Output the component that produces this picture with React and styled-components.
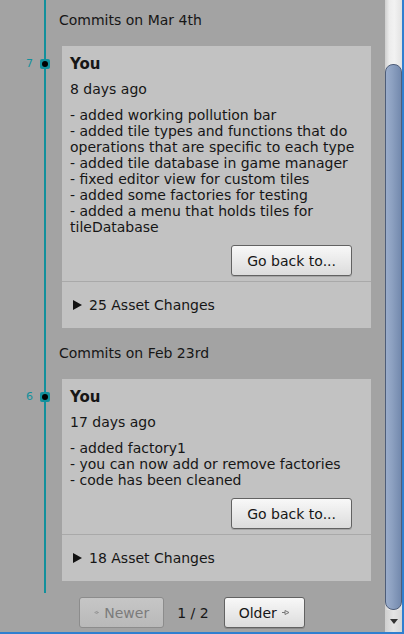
import React from "react";
import styled, { createGlobalStyle } from "styled-components";

const BG = "#a3a3a3";
const CARD = "#c2c2c2";
const TEAL = "#12909c";
const FRAME = "#2f7fd0";

const GlobalStyle = createGlobalStyle`
  html, body {
    margin: 0;
    padding: 0;
    background: ${BG};
  }
  body {
    font-family: "DejaVu Sans", Verdana, sans-serif;
    font-size: 14px;
    color: #161616;
  }
`;

const Frame = styled.div`
  width: 404px;
  height: 634px;
  box-sizing: border-box;
  border-bottom: 2px solid ${FRAME};
  display: flex;
  flex-direction: column;
  background: ${BG};
  overflow: hidden;
`;

const Body = styled.div`
  flex: 1;
  display: flex;
  min-height: 0;
  border-right: 2px solid ${FRAME};
`;

const Main = styled.main`
  width: 385px;
  display: flex;
  flex-direction: column;
  overflow: hidden;
`;

const Timeline = styled.div`
  margin-left: 44px;
  border-left: 2px solid ${TEAL};
  padding: 12px 13px 12px 13px;
  display: flex;
  flex-direction: column;
`;

const DayHeader = styled.div`
  line-height: 16px;
  margin-top: ${(p) => (p.$first ? "0" : "17px")};
  margin-bottom: 18px;
`;

const Card = styled.section`
  position: relative;
  margin-left: 3px;
  width: 309px;
  background: ${CARD};
  display: flex;
  flex-direction: column;
`;

const Marker = styled.div`
  position: absolute;
  top: 13px;
  right: calc(100% + 12px);
  display: flex;
  align-items: center;
  gap: 7px;
`;

const Index = styled.span`
  color: ${TEAL};
  font-size: 11px;
  line-height: 10px;
`;

const Dot = styled.span`
  width: 10px;
  height: 10px;
  border-radius: 2px;
  background: ${TEAL};
  display: flex;
  align-items: center;
  justify-content: center;

  &::after {
    content: "";
    width: 6px;
    height: 6px;
    border-radius: 50%;
    background: #000;
  }
`;

const CardBody = styled.div`
  padding: 10px 19px 5px 8px;
  display: flex;
  flex-direction: column;
  line-height: 16px;
`;

const Author = styled.div`
  font-weight: bold;
  font-size: 15px;
`;

const When = styled.div`
  margin-top: 9px;
`;

const Message = styled.div`
  margin-top: 10px;
  white-space: pre;
  margin-right: -19px;
`;

const Actions = styled.div`
  margin-top: 10px;
  display: flex;
  justify-content: flex-end;
`;

const Button = styled.button`
  font-family: inherit;
  font-size: 14px;
  height: 31px;
  padding: 0 ${(p) => p.$pad || 15}px;
  border-radius: 3px;
  display: flex;
  align-items: center;
  justify-content: center;
  gap: 5px;
  border: 1px solid ${(p) => (p.disabled ? "#8c8c8c" : "#626262")};
  color: ${(p) => (p.disabled ? "#7b7b7b" : "#161616")};
  background: ${(p) =>
    p.disabled
      ? "linear-gradient(#c6c6c6, #b9b9b9)"
      : "linear-gradient(#f8f8f8, #dcdcdc)"};
  box-shadow: ${(p) => (p.disabled ? "none" : "0 1px 0 rgba(0,0,0,0.15)")};
`;

const Footer = styled.div`
  height: 46px;
  border-top: 1px solid #a9a9a9;
  display: flex;
  align-items: center;
  gap: 7px;
  padding: 0 0 0 11px;
`;

const Pager = styled.nav`
  margin-top: 4px;
  display: flex;
  justify-content: center;
  align-items: center;
  gap: 13px;
  padding-right: 1px;
`;

const PageLabel = styled.span`
  padding-right: 2px;
`;

const Scrollbar = styled.div`
  width: 17px;
  display: flex;
  flex-direction: column;
`;

const Track = styled.div`
  flex: 1;
  padding-top: 64px;
  display: flex;
  flex-direction: column;
  background: linear-gradient(90deg, #cfcfcf 0%, #ececec 25%, #f2f2f2 55%, #e2e2e2 100%);
`;

const Thumb = styled.div`
  flex: 1;
  box-sizing: border-box;
  border: 1px solid #4e5d78;
  border-radius: 8px;
  background: linear-gradient(90deg, #9aaccb 0%, #8da1c1 40%, #7389ad 100%);
`;

const ArrowButton = styled.div`
  height: 22px;
  display: flex;
  align-items: center;
  justify-content: center;
  background: linear-gradient(90deg, #cfcfcf, #e4e4e4 50%, #d6d6d6);
`;

const Chevron = () => (
  <svg width="9" height="10" viewBox="0 0 9 10">
    <polygon points="0,0 9,5 0,10" fill="#111" />
  </svg>
);

const PageArrow = ({ dir, color }) => (
  <svg width="8" height="5" viewBox="0 0 8 5">
    {dir === "left" ? (
      <path d="M8 2.5H5 M5 0.5L1 2.5L5 4.5Z" stroke={color} strokeWidth="1" fill="none" />
    ) : (
      <path d="M0 2.5H3 M3 0.5L7 2.5L3 4.5Z" stroke={color} strokeWidth="1" fill="none" />
    )}
  </svg>
);

const commits = [
  {
    day: "Commits on Mar 4th",
    index: 7,
    author: "You",
    when: "8 days ago",
    message:
      "- added working pollution bar\n- added tile types and functions that do\noperations that are specific to each type\n- added tile database in game manager\n- fixed editor view for custom tiles\n- added some factories for testing\n- added a menu that holds tiles for\ntileDatabase",
    changes: 25,
  },
  {
    day: "Commits on Feb 23rd",
    index: 6,
    author: "You",
    when: "17 days ago",
    message:
      "- added factory1\n- you can now add or remove factories\n- code has been cleaned",
    changes: 18,
  },
];

export default function App() {
  return (
    <>
      <GlobalStyle />
      <Frame>
        <Body>
          <Main>
            <Timeline>
              {commits.map((c, i) => (
                <React.Fragment key={c.index}>
                  <DayHeader $first={i === 0}>{c.day}</DayHeader>
                  <Card>
                    <Marker>
                      <Index>{c.index}</Index>
                      <Dot />
                    </Marker>
                    <CardBody>
                      <Author>{c.author}</Author>
                      <When>{c.when}</When>
                      <Message>{c.message}</Message>
                      <Actions>
                        <Button>Go back to...</Button>
                      </Actions>
                    </CardBody>
                    <Footer>
                      <Chevron />
                      <span>{c.changes} Asset Changes</span>
                    </Footer>
                  </Card>
                </React.Fragment>
              ))}
            </Timeline>
            <Pager>
              <Button disabled $pad={14} style={{ width: 85 }}>
                <PageArrow dir="left" color="#8a8a8a" />
                Newer
              </Button>
              <PageLabel>1 / 2</PageLabel>
              <Button $pad={14}>
                Older
                <PageArrow dir="right" color="#777" />
              </Button>
            </Pager>
          </Main>
          <Scrollbar>
            <Track>
              <Thumb />
            </Track>
            <ArrowButton>
              <svg width="8" height="5" viewBox="0 0 8 5">
                <polygon points="0,0 8,0 4,5" fill="#333" />
              </svg>
            </ArrowButton>
          </Scrollbar>
        </Body>
      </Frame>
    </>
  );
}
